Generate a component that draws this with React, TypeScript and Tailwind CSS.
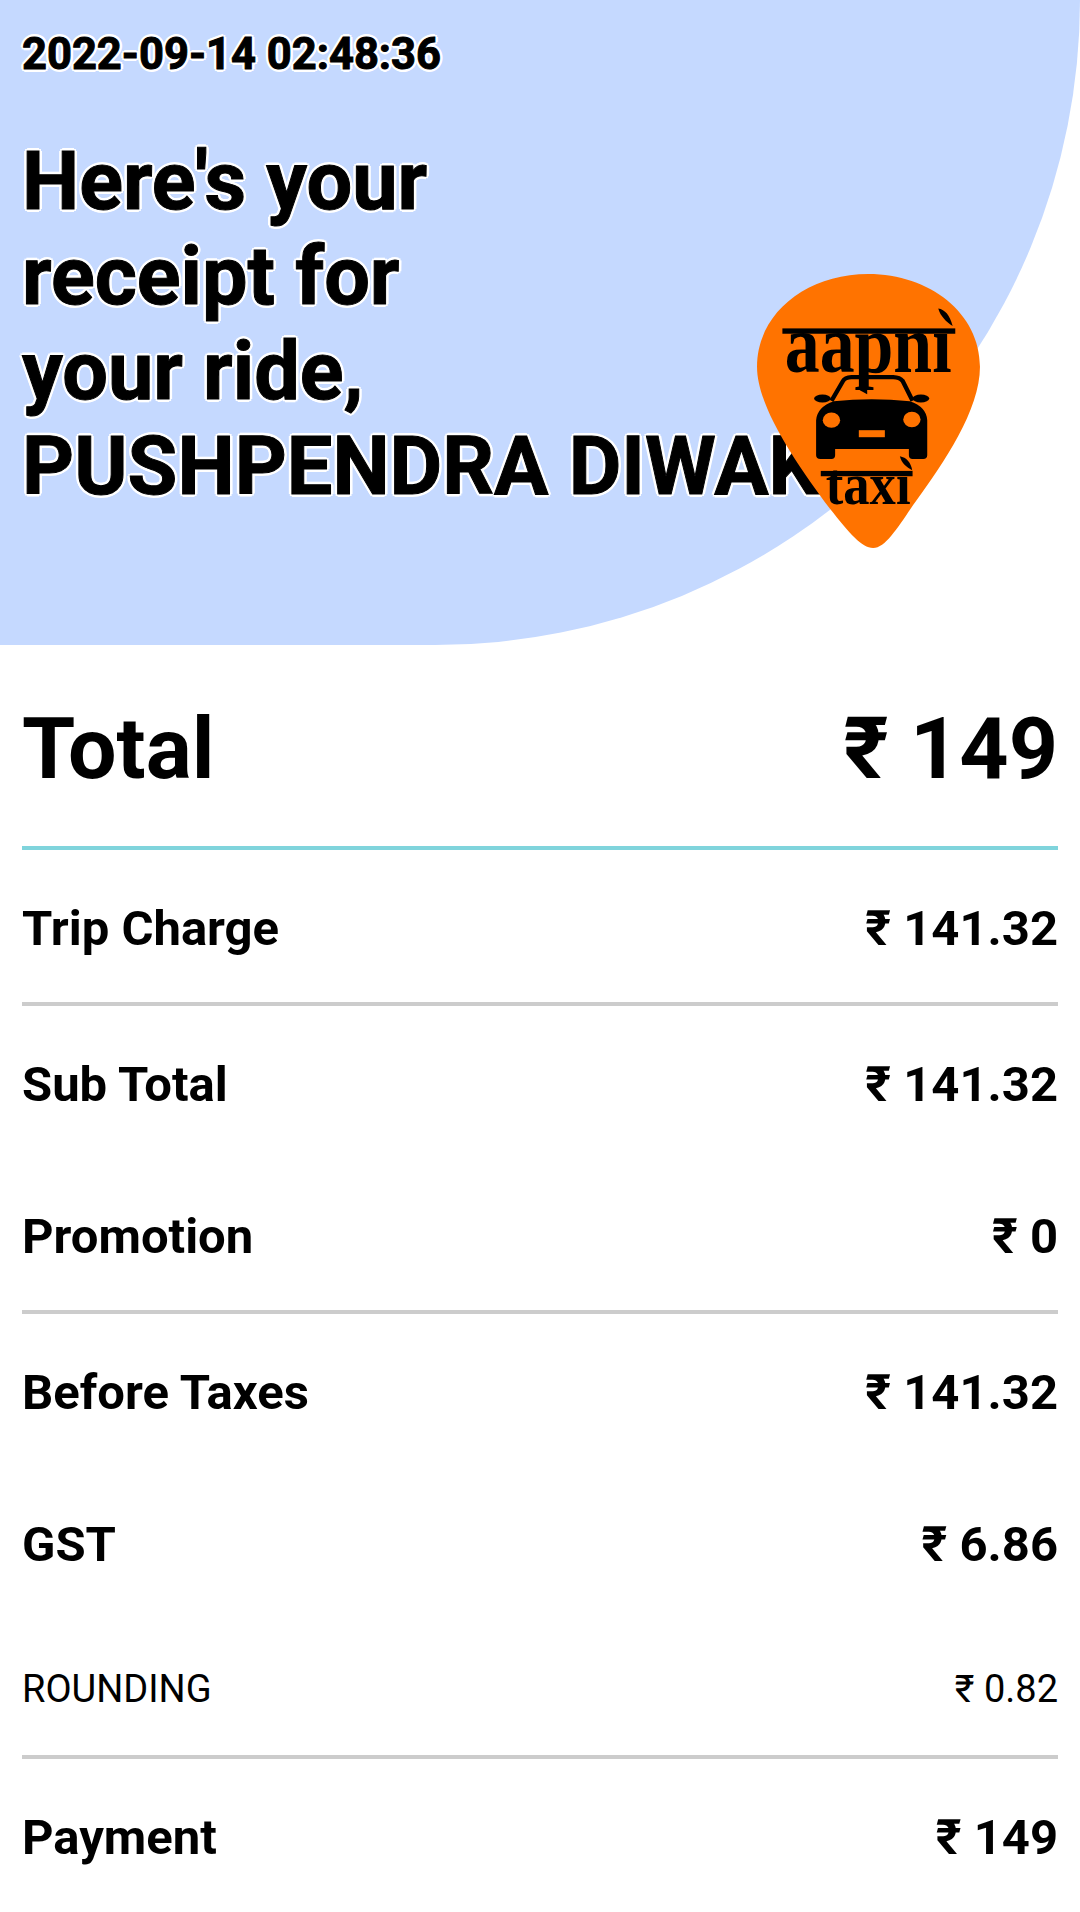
const outline =
  "[-webkit-text-stroke:1px_#000] [text-shadow:3px_0_0_#fff,-3px_0_0_#fff,0_3px_0_#fff,0_-3px_0_#fff,2px_2px_0_#fff,-2px_2px_0_#fff,2px_-2px_0_#fff,-2px_-2px_0_#fff]";

const Pin = () => (
  <svg
    className="absolute left-[757px] top-[274px]"
    width="223"
    height="274"
    viewBox="82 72 668 821"
    xmlns="http://www.w3.org/2000/svg"
  >
    <defs>
      <clipPath id="topWord">
        <rect x="150" y="240" width="530" height="200" />
      </clipPath>
      <clipPath id="bottomWord">
        <path d="M273 630H345V670H560V780H273Z" />
      </clipPath>
    </defs>
    <path
      fill="#ff7300"
      d="M415 72C600 72 750 190 750 350C750 480 640 640 560 750C510 820 470 893 430 893C395 893 360 850 300 775C200 640 82 470 82 350C82 190 230 72 415 72Z"
    />
    {/* top word */}
    <text
      x="165"
      y="365"
      textLength="500"
      lengthAdjust="spacingAndGlyphs"
      fontFamily="'Liberation Serif', serif"
      fontWeight="700"
      fontSize="250"
      fill="#000"
      clipPath="url(#topWord)"
    >
      aapni
    </text>
    <rect x="158" y="235" width="518" height="16" fill="#000" />
    <path d="M625 175C645 178 660 195 668 228C650 215 632 200 625 175Z" fill="#000" />
    {/* car */}
    <path d="M390 360H412V432L390 420Z" fill="#000" />
    <path d="M305 452L340 392Q345 382 365 381H490Q510 382 518 392L548 452" fill="none" stroke="#000" strokeWidth="13" />
    <ellipse cx="278" cy="445" rx="25" ry="12" fill="#000" />
    <ellipse cx="573" cy="445" rx="25" ry="12" fill="#000" />
    <path
      d="M312 453Q425 442 540 453Q590 470 592 510V615Q592 626 580 626H548Q537 626 537 615V596H316V615Q316 626 305 626H272Q259 626 259 615V510Q262 470 312 453Z"
      fill="#000"
    />
    <ellipse cx="305" cy="510" rx="26" ry="23" fill="#ff7300" />
    <ellipse cx="546" cy="508" rx="26" ry="23" fill="#ff7300" />
    <rect x="387" y="540" width="78" height="21" fill="#ff7300" />
    {/* bottom word */}
    <text
      x="288"
      y="760"
      textLength="254"
      lengthAdjust="spacingAndGlyphs"
      fontFamily="'Liberation Serif', serif"
      fontWeight="700"
      fontSize="178"
      fill="#000"
      clipPath="url(#bottomWord)"
    >
      taxi
    </text>
    <rect x="273" y="662" width="275" height="16" fill="#000" />
    <path d="M510 618C530 622 542 635 547 660C530 650 515 640 510 618Z" fill="#000" />
  </svg>
);

const Row = ({ label, value }: { label: string; value: string }) => (
  <div className="flex h-[152px] items-center justify-between pt-[5px] text-[49px] font-bold">
    <span>{label}</span>
    <span>{value}</span>
  </div>
);

const Divider = () => <div className="h-1 bg-[#cccccc]" />;

export default function App() {
  return (
    <div className="relative h-[1912px] w-[1080px] overflow-hidden bg-white font-['Roboto',sans-serif] text-black">
      <div className="h-[645px] rounded-br-[650px] bg-[#c5d9ff] px-[22px] pt-[28px]">
        <p className={`text-[43.5px] font-bold leading-[54px] ${outline}`}>2022-09-14 02:48:36</p>
        <h1 className={`mt-[52px] whitespace-nowrap text-[81px] font-bold leading-[95px] ${outline}`}>
          Here's your
          <br />
          receipt for
          <br />
          your ride,
          <br />
          PUSHPENDRA DIWAK
        </h1>
      </div>

      <Pin />

      <div className="px-[22px]">
        <div className="flex h-[201px] items-center justify-between pt-[6px] text-[86px] font-bold">
          <span>Total</span>
          <span>₹ 149</span>
        </div>
        <div className="h-1 bg-[#7fd4dc]" />
        <Row label="Trip Charge" value="₹ 141.32" />
        <Divider />
        <Row label="Sub Total" value="₹ 141.32" />
        <Row label="Promotion" value="₹ 0" />
        <Divider />
        <Row label="Before Taxes" value="₹ 141.32" />
        <Row label="GST" value="₹ 6.86" />
        <div className="flex h-[137px] items-center justify-between pt-[5px] text-[38px]">
          <span>ROUNDING</span>
          <span>₹ 0.82</span>
        </div>
        <Divider />
        <Row label="Payment" value="₹ 149" />
      </div>
    </div>
  );
}
